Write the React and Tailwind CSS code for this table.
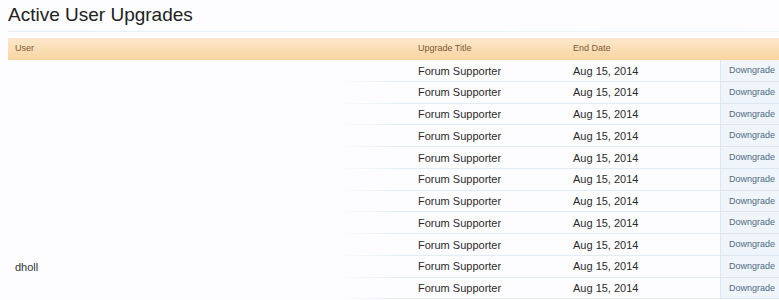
import React from 'react';

const rows = Array.from({ length: 11 }, (_, i) => ({
  user: i === 9 ? 'dholl' : '',
  title: 'Forum Supporter',
  end: 'Aug 15, 2014',
}));

const App = () => {
  return (
    <div className="w-[779px] h-[300px] overflow-hidden bg-[#fdfdff] text-[#2b2b2b] font-['Liberation_Sans',Arial,sans-serif]">
      <div className="pl-2">
        <h1 className="pt-[3px] h-[31px] text-[19px] leading-[24px] text-[#222]">Active User Upgrades</h1>
        <div className="h-px bg-gradient-to-r from-[#e4eef7] to-[#eef4fa]" />
        <div className="mt-[6px] h-[22px] flex items-center text-[9px] text-[#7c5a3a] bg-gradient-to-b from-[#fde8cc] to-[#f8d4a0]">
          <div className="w-[402px] pl-[7px]">User</div>
          <div className="w-[155px] pl-2">Upgrade Title</div>
          <div className="flex-1 pl-2">End Date</div>
        </div>
        {rows.map((r, i) => (
          <div key={i} className="flex h-[21.75px] text-[11px]">
            <div className="w-[402px] flex items-center pl-[7px] pt-px text-[#333] bg-[linear-gradient(to_right,transparent_0%,transparent_82%,#e2ecf4_98%)] bg-no-repeat bg-bottom bg-[length:100%_1px]">
              {r.user}
            </div>
            <div className="w-[155px] flex items-center pl-2 pt-px border-b border-[#e2ecf4]">{r.title}</div>
            <div className="w-[155px] flex items-center pl-2 pt-px border-b border-[#e2ecf4]">{r.end}</div>
            <div className="flex-1 flex items-center pl-[8px] pt-px text-[9px] text-[#506a84] bg-[#eff5fb] border-l border-b border-[#dbe6f0]">
              Downgrade
            </div>
          </div>
        ))}
      </div>
    </div>
  );
};

export default App;
